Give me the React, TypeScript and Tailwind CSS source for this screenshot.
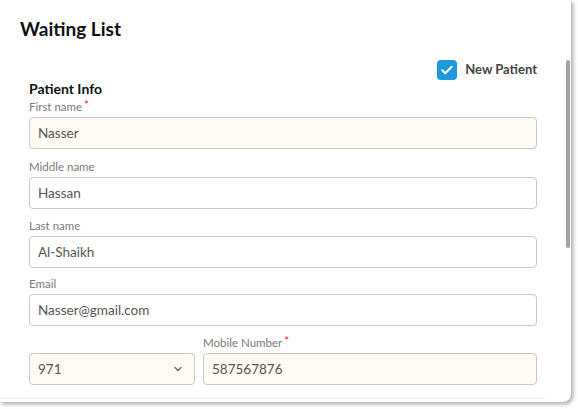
import { ChevronDown } from 'lucide-react';

function Label({ text, required }: { text: string; required?: boolean }) {
  return (
    <div className="text-[11.5px] leading-[16px] text-[#7a7a7a]">
      {text}
      {required && <span className="text-[#e0201a] ml-[2px] relative -top-[2px]">*</span>}
    </div>
  );
}

function Field({ value, filled }: { value: string; filled?: boolean }) {
  return (
    <div
      className={`h-[32px] rounded-[4px] border border-[#c9c9c9] flex items-center px-[8px] text-[13.5px] text-[#555] ${
        filled ? 'bg-[#fffaf2]' : 'bg-white'
      }`}
    >
      {value}
    </div>
  );
}

export default function App() {
  return (
    <div className="w-[578px] h-[409px] bg-white" style={{ fontFamily: 'Lato, "Noto Sans", sans-serif' }}>
      <div className="relative w-[571px] h-[402px] bg-white rounded-br-[8px] shadow-[2px_2px_4px_rgba(0,0,0,0.35)]">
        <div className="pt-[15px] pl-[20px] text-[19px] leading-[28px] font-bold text-[#111]">Waiting List</div>

        <div className="px-[29px] w-[566px]">
          <div className="flex justify-end items-center gap-[8px] mt-[17px] h-[20px]">
            <div className="w-[20px] h-[20px] rounded-[4px] bg-[#1b9ade] flex items-center justify-center">
              <svg width="14" height="14" viewBox="0 0 24 24" fill="none" stroke="white" strokeWidth="3.5" strokeLinecap="round" strokeLinejoin="round">
                <path d="M4 12.5l5 5L20 6.5" />
              </svg>
            </div>
            <span className="text-[13px] font-bold text-[#444]">New Patient</span>
          </div>

          <div className="text-[14px] leading-[18px] font-bold text-[#111]">Patient Info</div>
          <div className="mt-[1px]">
            <Label text="First name" required />
          </div>
          <div className="mt-[2px]">
            <Field value="Nasser" filled />
          </div>

          <div className="mt-[10px]">
            <Label text="Middle name" />
          </div>
          <div className="mt-[2px]">
            <Field value="Hassan" />
          </div>

          <div className="mt-[9px]">
            <Label text="Last name" />
          </div>
          <div className="mt-[2px]">
            <Field value="Al-Shaikh" />
          </div>

          <div className="mt-[8px]">
            <Label text="Email" />
          </div>
          <div className="mt-[2px]">
            <Field value="Nasser@gmail.com" />
          </div>

          <div className="flex gap-[8px] mt-[9px]">
            <div className="w-[166px] pt-[18px]">
              <div className="h-[32px] rounded-[4px] border border-[#c9c9c9] bg-[#fffaf2] flex items-center justify-between px-[8px] text-[13.5px] text-[#555]">
                <span>971</span>
                <ChevronDown size={12} strokeWidth={2.5} className="text-[#666] mr-[2px]" />
              </div>
            </div>
            <div className="flex-1">
              <Label text="Mobile Number" required />
              <div className="mt-[2px]">
                <Field value="587567876" filled />
              </div>
            </div>
          </div>
        </div>

        <div className="absolute left-0 right-[26px] bottom-[3px] h-[1px] bg-[#ececec]" />
        <div className="absolute right-[1px] top-[60px] w-[4px] h-[188px] rounded-[2px] bg-[#a3a3a3]" />
      </div>
    </div>
  );
}
